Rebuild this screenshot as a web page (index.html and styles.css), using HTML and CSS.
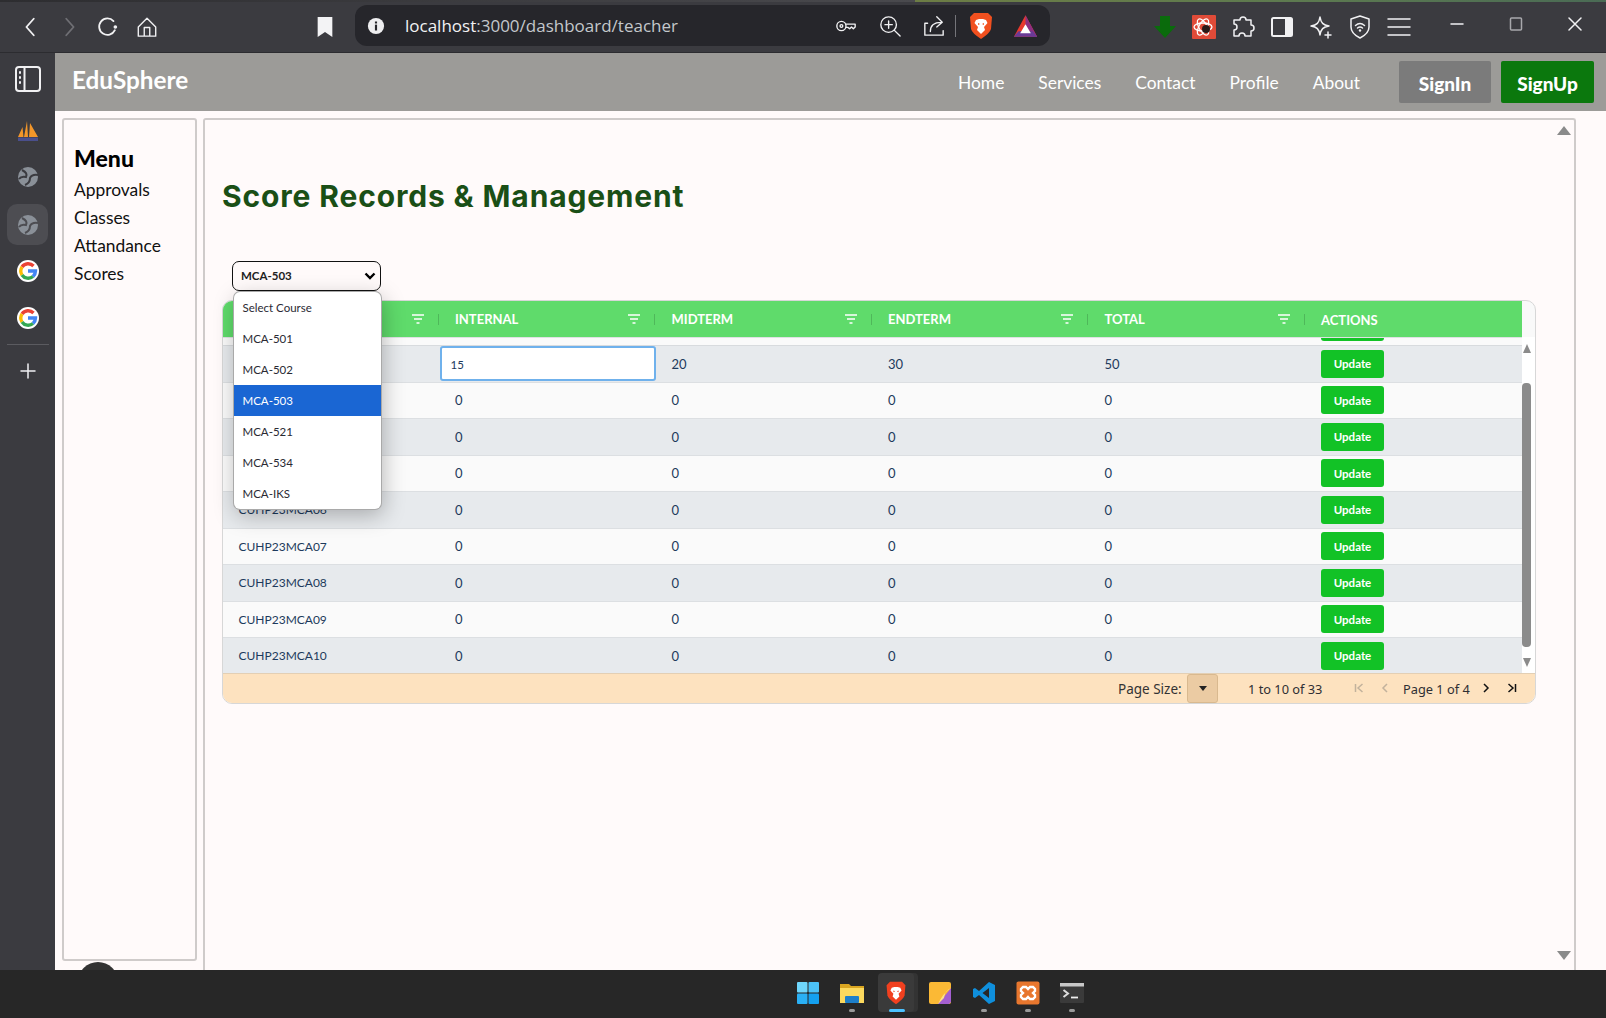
FILE: index.html
```html
<!DOCTYPE html>
<html lang="en">
<head>
<meta charset="utf-8">
<title>EduSphere</title>
<link rel="stylesheet" href="styles.css">
</head>
<body>
<div class="wallstrip"></div>
<div class="toolbar">
  <svg class="ti back" viewBox="0 0 24 24"><path d="M15 3 L7 12 L15 21" class="st"/></svg>
  <svg class="ti fwd" viewBox="0 0 24 24"><path d="M9 3 L17 12 L9 21" class="st dim"/></svg>
  <svg class="ti reload" viewBox="0 0 24 24"><path d="M19.500 15.500 A9 9 0 1 1 18 5.500" class="st"/><circle cx="20" cy="12" r="2" fill="#f1f1f3"/></svg>
  <svg class="ti home" viewBox="0 0 24 24"><path d="M2.500 12 L12 2.500 L21.500 12 V22 H2.500 Z M9 22 V12.500 H15 V22" class="st thin"/></svg>
  <svg class="ti bookmark" viewBox="0 0 24 24"><path d="M4 1 H20 V23 L12 17.500 L4 23 Z" fill="#f3f3f5"/></svg>
  <div class="urlbar">
    <svg class="info" viewBox="0 0 20 20"><circle cx="10" cy="10" r="9" fill="#eeeef0"/><rect x="8.800" y="8.500" width="2.400" height="6.500" fill="#26262b"/><rect x="8.800" y="5" width="2.400" height="2.200" fill="#26262b"/></svg>
    <span class="url">localhost<span class="urlrest">:3000/dashboard/teacher</span></span>
    <svg class="ti key" viewBox="0 0 24 24"><circle cx="7" cy="12" r="5" class="st thin"/><circle cx="7" cy="12" r="1.500" class="st thin"/><path d="M12 10 H22 V13 L20 15 L18 13 L16 15 L14 13.500 H12" class="st thin"/></svg>
    <svg class="ti zoomi" viewBox="0 0 24 24"><circle cx="10.500" cy="10.500" r="8.500" class="st thin"/><path d="M10.500 6.500 V14.500 M6.500 10.500 H14.500 M16.500 16.500 L23 23" class="st thin"/></svg>
    <svg class="ti share" viewBox="0 0 24 24"><path d="M5 9 H2 V22 H22 V17 M8 18 C8 11 12 8 20 8 M15 2 L21 8 L15 13" class="st thin"/></svg>
    <span class="urlsep"></span>
    <svg class="brave" viewBox="0 0 24 28"><path d="M5 1 H19 L23 5 L22 17 Q21 21 12 27 Q3 21 2 17 L1 5 Z" fill="#f1501f"/><path d="M7 8 L10 7 H14 L17 8 L18.500 11 L15 15 L16 18 L12 22 L8 18 L9 15 L5.500 11 Z" fill="#fff"/><path d="M9 11 L11 12 L9 13 Z M15 11 L13 12 L15 13 Z" fill="#f1501f"/></svg>
    <svg class="bat" viewBox="0 0 28 26"><path d="M14 1 L27 25 H1 Z" fill="#e8382d"/><path d="M14 1 L27 25 H20 L14 12 Z" fill="#8e2f82"/><path d="M1 25 L6 19 H22 L27 25 Z" fill="#6a3a96"/><path d="M14 11 L20 21 H8 Z" fill="#fff"/></svg>
  </div>
  <svg class="ext arrow" viewBox="0 0 24 24"><path d="M7 1 H17 V11 H23 L12 23 L1 11 H7 Z" fill="#0a6b0c"/></svg>
  <svg class="ext react" viewBox="0 0 24 24"><rect width="24" height="24" rx="1" fill="#e04b38"/><g fill="none" stroke="#fff" stroke-width="1.300"><ellipse cx="11" cy="12" rx="9" ry="4"/><ellipse cx="11" cy="12" rx="9" ry="4" transform="rotate(60 11 12)"/><ellipse cx="11" cy="12" rx="9" ry="4" transform="rotate(120 11 12)"/></g><circle cx="14" cy="14" r="4" fill="#2a1a18"/></svg>
  <svg class="ext" viewBox="0 0 24 24"><path d="M9 5 A3 3 0 1 1 15 5 H20 V10 A3 3 0 1 1 20 16 V21 H14 A3 3 0 1 0 8 21 H3 V15 A3 3 0 1 0 3 9 V5 Z" class="st thin"/></svg>
  <svg class="ext" viewBox="0 0 24 24"><rect x="2" y="3" width="20" height="18" rx="1.500" class="st"/><rect x="15" y="3" width="7" height="18" fill="#f1f1f3"/></svg>
  <svg class="ext" viewBox="0 0 24 24"><path d="M11 2 C12 8 14 10 20 11 C14 12 12 14 11 20 C10 14 8 12 2 11 C8 10 10 8 11 2 Z" class="st thin"/><path d="M19 17 V23 M16 20 H22" class="st thin"/></svg>
  <svg class="ext" viewBox="0 0 24 24"><path d="M12 1 L21 4 V12 C21 18 16 21 12 23 C8 21 3 18 3 12 V4 Z" class="st thin"/><path d="M7.500 10.500 Q12 6.500 16.500 10.500 M9.500 13 Q12 11 14.500 13" class="st thin"/><circle cx="12" cy="15.500" r="1.200" fill="#f1f1f3"/></svg>
  <svg class="ext" viewBox="0 0 24 24"><path d="M1 4 H23 M1 12 H23 M1 20 H23" class="st thin"/></svg>
  <div class="winctl">
    <svg viewBox="0 0 14 14"><path d="M1 7 H13" class="st thin"/></svg>
    <svg viewBox="0 0 14 14"><rect x="1.500" y="1" width="11" height="12" rx="1" class="st thin gray"/></svg>
    <svg viewBox="0 0 14 14"><path d="M1 1 L13 13 M13 1 L1 13" class="st thin"/></svg>
  </div>
</div>

<div class="middle">
  <aside class="rail">
    <svg class="r-ico r-panel" viewBox="0 0 26 26"><rect x="1" y="1" width="24" height="24" rx="3" class="st"/><path d="M9.500 1 V25" class="st"/><path d="M5 6 V7 M5 11 V12 M5 16 V17" class="st"/></svg>
    <svg class="r-ico fav" viewBox="0 0 24 24"><path d="M2 18 L6.500 8 L7.500 18 Z M8 18 L11 2 L12 18 Z M13 18 L14 4 L22 18 Z" fill="#f2962a"/><rect x="2" y="18.500" width="20" height="3.500" fill="#4a4f8c"/></svg>
    <svg class="r-ico globe" viewBox="0 0 24 24"><circle cx="12" cy="12" r="10" fill="#8a9098"/><path d="M6 5 Q12 8 10 12 Q5 11 3 14 M22 10 Q16 9 14 13 Q14 18 9 20" fill="none" stroke="#3b3b40" stroke-width="2"/></svg>
    <div class="r-tile"><svg class="r-ico flush" viewBox="0 0 24 24"><circle cx="12" cy="12" r="10" fill="#8a9098"/><path d="M6 5 Q12 8 10 12 Q5 11 3 14 M22 10 Q16 9 14 13 Q14 18 9 20" fill="none" stroke="#4d4d52" stroke-width="2"/></svg></div>
    <svg class="r-ico goog" viewBox="0 0 24 24"><circle cx="12" cy="12" r="11" fill="#fff"/><path d="M17.500 7 A7.500 7.500 0 0 0 6 8" fill="none" stroke="#ea4335" stroke-width="3.400"/><path d="M6 8 A7.500 7.500 0 0 0 6 16" fill="none" stroke="#fbbc05" stroke-width="3.400"/><path d="M6 16 A7.500 7.500 0 0 0 17 17.500" fill="none" stroke="#34a853" stroke-width="3.400"/><path d="M17 17.500 A7.500 7.500 0 0 0 19.500 12 H12" fill="none" stroke="#4285f4" stroke-width="3.400"/></svg>
    <svg class="r-ico goog" viewBox="0 0 24 24"><circle cx="12" cy="12" r="11" fill="#fff"/><path d="M17.500 7 A7.500 7.500 0 0 0 6 8" fill="none" stroke="#ea4335" stroke-width="3.400"/><path d="M6 8 A7.500 7.500 0 0 0 6 16" fill="none" stroke="#fbbc05" stroke-width="3.400"/><path d="M6 16 A7.500 7.500 0 0 0 17 17.500" fill="none" stroke="#34a853" stroke-width="3.400"/><path d="M17 17.500 A7.500 7.500 0 0 0 19.500 12 H12" fill="none" stroke="#4285f4" stroke-width="3.400"/></svg>
    <div class="r-div"></div>
    <svg class="r-ico plus" viewBox="0 0 16 16"><path d="M8 1 V15 M1 8 H15" class="st thin"/></svg>
  </aside>

  <div class="page">
    <header class="appbar">
      <div class="logo">EduSphere</div>
      <nav class="nav">
        <a>Home</a><a>Services</a><a>Contact</a><a>Profile</a><a>About</a>
      </nav>
      <button class="btn signin">SignIn</button>
      <button class="btn signup">SignUp</button>
    </header>
    <div class="content">
      <aside class="menu">
        <h2>Menu</h2>
        <a>Approvals</a><a>Classes</a><a>Attandance</a><a>Scores</a>
      </aside>
      <span class="avatar"></span>
      <main class="panel">
        <div class="panel-body">
          <h1>Score Records &amp; Management</h1>
          <div class="select-wrap">
            <div class="select">MCA-503
              <svg viewBox="0 0 12 8"><path d="M1.500 1.500 L6 6 L10.500 1.500" fill="none" stroke="#000" stroke-width="2.400"/></svg>
            </div>
            <ul class="dropdown">
              <li>Select Course</li><li>MCA-501</li><li>MCA-502</li><li class="sel">MCA-503</li><li>MCA-521</li><li>MCA-534</li><li>MCA-IKS</li>
            </ul>
          </div>
          <div class="grid">
            <div class="g-head">
              <div class="hc"><span></span><svg class="flt" viewBox="0 0 12 10"><path d="M0 1 H12 M2 5 H10 M4.500 9 H7.500" /></svg></div>
              <div class="hc"><span>INTERNAL</span><svg class="flt" viewBox="0 0 12 10"><path d="M0 1 H12 M2 5 H10 M4.500 9 H7.500" /></svg></div>
              <div class="hc"><span>MIDTERM</span><svg class="flt" viewBox="0 0 12 10"><path d="M0 1 H12 M2 5 H10 M4.500 9 H7.500" /></svg></div>
              <div class="hc"><span>ENDTERM</span><svg class="flt" viewBox="0 0 12 10"><path d="M0 1 H12 M2 5 H10 M4.500 9 H7.500" /></svg></div>
              <div class="hc"><span>TOTAL</span><svg class="flt" viewBox="0 0 12 10"><path d="M0 1 H12 M2 5 H10 M4.500 9 H7.500" /></svg></div>
              <div class="hc end"><span>ACTIONS</span></div>
            </div>
            <div class="g-mid">
              <div class="g-rows">
                <div class="stub"><i></i></div>
                <div class="r odd"><div></div><div class="edit"><input class="inp" value="15"></div><div>20</div><div>30</div><div>50</div><div><button class="upd">Update</button></div></div>
                <div class="r"><div></div><div>0</div><div>0</div><div>0</div><div>0</div><div><button class="upd">Update</button></div></div>
                <div class="r odd"><div></div><div>0</div><div>0</div><div>0</div><div>0</div><div><button class="upd">Update</button></div></div>
                <div class="r"><div></div><div>0</div><div>0</div><div>0</div><div>0</div><div><button class="upd">Update</button></div></div>
                <div class="r odd"><div>CUHP23MCA06</div><div>0</div><div>0</div><div>0</div><div>0</div><div><button class="upd">Update</button></div></div>
                <div class="r"><div>CUHP23MCA07</div><div>0</div><div>0</div><div>0</div><div>0</div><div><button class="upd">Update</button></div></div>
                <div class="r odd"><div>CUHP23MCA08</div><div>0</div><div>0</div><div>0</div><div>0</div><div><button class="upd">Update</button></div></div>
                <div class="r"><div>CUHP23MCA09</div><div>0</div><div>0</div><div>0</div><div>0</div><div><button class="upd">Update</button></div></div>
                <div class="r odd"><div>CUHP23MCA10</div><div>0</div><div>0</div><div>0</div><div>0</div><div><button class="upd">Update</button></div></div>
              </div>
              <div class="g-scroll">
                <span class="tri up"></span>
                <span class="thumb"></span>
                <span class="tri down"></span>
              </div>
            </div>
            <div class="g-foot">
              <span class="lbl">Page Size:</span>
              <span class="psize"><i></i></span>
              <span class="count">1 to 10 of 33</span>
              <svg class="pg" viewBox="0 0 12 12"><path d="M2.500 2 V10 M9.500 2 L5 6 L9.500 10" /></svg>
              <svg class="pg pprev" viewBox="0 0 12 12"><path d="M8 2 L4 6 L8 10" /></svg>
              <span class="pageof">Page <b>1</b> of <b>4</b></span>
              <svg class="pg on" viewBox="0 0 12 12"><path d="M4 2 L8 6 L4 10" /></svg>
              <svg class="pg on plast" viewBox="0 0 12 12"><path d="M9.500 2 V10 M2.500 2 L7 6 L2.500 10" /></svg>
            </div>
          </div>
        </div>
        <div class="page-scroll"><span class="ptri up"></span><span class="ptri down"></span></div>
      </main>
    </div>
  </div>
</div>

<footer class="taskbar">
  <div class="tk"><svg viewBox="0 0 24 24"><rect x="1" y="1" width="10.500" height="10.500" rx="1" fill="#6fd6fb"/><rect x="12.500" y="1" width="10.500" height="10.500" rx="1" fill="#4cc2f7"/><rect x="1" y="12.500" width="10.500" height="10.500" rx="1" fill="#2ab0f5"/><rect x="12.500" y="12.500" width="10.500" height="10.500" rx="1" fill="#14a0f0"/></svg></div>
  <div class="tk dot"><svg viewBox="0 0 24 24"><path d="M0 3 H9 L11 5 H24 V22 H0 Z" fill="#d9a520"/><rect y="7" width="24" height="15" fill="#fbd95e"/><rect x="5" y="15" width="14" height="7" rx="1" fill="#1d7fc9"/></svg></div>
  <div class="tk active"><svg viewBox="0 0 24 28"><path d="M5 1 H19 L23 5 L22 17 Q21 21 12 27 Q3 21 2 17 L1 5 Z" fill="#f1401f"/><path d="M7 8 L10 7 H14 L17 8 L18.500 11 L15 15 L16 18 L12 22 L8 18 L9 15 L5.500 11 Z" fill="#fff"/><path d="M9 11 L11 12 L9 13 Z M15 11 L13 12 L15 13 Z" fill="#f1401f"/></svg></div>
  <div class="tk"><svg viewBox="0 0 24 24"><rect x="1" y="1" width="22" height="22" rx="2" fill="#fbb935"/><path d="M23 7 L10 23 H21 L23 21 Z" fill="#a45fd0"/><path d="M23 7 Q17 9 16 17 L10 23 Q15 12 23 7 Z" fill="#fde08a"/></svg></div>
  <div class="tk dot"><svg viewBox="0 0 24 24"><path d="M17 1 L23 4 V20 L17 23 L7 14 L3 17 L1 16 V8 L3 7 L7 10 Z M17 7 L10.500 12 L17 17 Z" fill="#0f8fdc"/></svg></div>
  <div class="tk dot"><svg viewBox="0 0 24 24"><rect x="0.500" y="0.500" width="23" height="23" rx="2" fill="#e8772e"/><path d="M7 6 H10 L12 8 L14 6 H17 L19 8 V10 L17 12 L19 14 V16 L17 18 H14 L12 16 L10 18 H7 L5 16 V14 L7 12 L5 10 V8 Z" fill="none" stroke="#fff" stroke-width="2.400"/></svg></div>
  <div class="tk dot"><svg viewBox="0 0 24 24"><rect y="2" width="24" height="20" rx="1" fill="#3a3a3a"/><rect y="2" width="24" height="3.500" fill="#c8c8c8"/><path d="M3.500 9 L8 12.500 L3.500 16" fill="none" stroke="#ddd" stroke-width="2"/><path d="M11 16.500 H18" stroke="#eee" stroke-width="1.800"/></svg></div>
</footer>
</body>
</html>
```
FILE: styles.css
```css
* { box-sizing: border-box; }
html, body { margin: 0; padding: 0; }
body {
  width: 1606px;
  height: 1018px;
  overflow: hidden;
  display: flex;
  flex-direction: column;
  font-family: "Lato", "Liberation Sans", sans-serif;
  background: #3b3b40;
}
.st { fill: none; stroke: #f1f1f3; stroke-width: 2; stroke-linecap: round; stroke-linejoin: round; }
.st.thin { stroke-width: 1.500; }
.st.dim { stroke: #6f6f74; }
.st.gray { stroke: #a8a8ac; }

.wallstrip {
  height: 2px;
  flex: none;
  background: linear-gradient(90deg, #2d2d30 0, #4a4a4e 915px, #6d7d45 915px, #5d7a50 1300px, #4a6b55 1606px);
}
.toolbar {
  height: 51px;
  flex: none;
  display: flex;
  align-items: center;
  background: #3b3b40;
  border-bottom: 1px solid #2c2c30;
  padding-left: 20px;
}
.ti { width: 22px; height: 22px; flex: none; }
.fwd { margin-left: 16px; }
.reload { margin-left: 17px; }
.home { margin-left: 17px; }
.bookmark { margin-left: 156px; }
.urlbar {
  width: 695px;
  height: 41px;
  margin: -3px 0 0 19px;
  border-radius: 12px;
  background: #26262b;
  display: flex;
  align-items: center;
  padding-left: 12px;
  flex: none;
}
.info { width: 18px; height: 18px; flex: none; }
.url {
  margin-left: 20px;
  width: 428px;
  font-family: "Open Sans", sans-serif;
  font-size: 17px;
  font-weight: 400;
  color: #f2f2f4;
  white-space: nowrap;
}
.urlrest { color: #c4c8cc; }
.key { margin-left: 2px; }
.zoomi { margin-left: 22px; }
.share { margin-left: 22px; }
.urlsep { width: 1px; height: 22px; background: #75757a; margin-left: 10px; flex: none; }
.brave { width: 24px; height: 28px; margin-left: 13px; flex: none; }
.bat { width: 25px; height: 24px; margin-left: 20px; flex: none; }
.ext { width: 24px; height: 24px; margin-left: 15px; flex: none; }
.ext.arrow { margin-left: 103px; }
.winctl { display: flex; gap: 45px; margin-left: 39px; align-items: center; }
.winctl svg { width: 14px; height: 14px; flex: none; margin-top: -6px; }

.middle { flex: 1; display: flex; min-height: 0; overflow: hidden; }
.rail {
  width: 55px;
  flex: none;
  background: #3b3b40;
  display: flex;
  flex-direction: column;
  align-items: center;
  padding-top: 13px;
}
.r-ico { width: 24px; height: 24px; flex: none; margin-top: 23px; }
.r-ico.r-panel { width: 26px; height: 26px; margin-top: 0; }
.r-ico.fav { margin-top: 27px; }
.r-ico.globe { margin-top: 22px; }
.r-ico.flush { margin-top: 0; }
.r-tile {
  width: 41px; height: 41px;
  border-radius: 10px;
  background: #4d4d52;
  margin-top: 15px;
  display: flex; align-items: center; justify-content: center;
  flex: none;
}
.r-tile + .goog { margin-top: 14px; }
.r-div { width: 42px; height: 1px; background: #5b5b60; margin-top: 14px; flex: none; }
.r-ico.plus { width: 16px; height: 16px; margin-top: 18px; }

.page { flex: 1; display: flex; flex-direction: column; min-width: 0; }
.appbar {
  height: 58px;
  flex: none;
  background: #9c9b98;
  display: flex;
  align-items: center;
  padding-left: 17px;
}
.logo { font-size: 24.300px; font-weight: 700; color: #fff; margin-top: -6px; }
.nav { display: flex; margin-left: auto; gap: 34px; font-size: 17.400px; color: #fff; margin-top: 1px; }
.btn {
  height: 42px;
  border: 0;
  border-radius: 2px;
  font-family: inherit;
  font-weight: 900;
  font-size: 19px;
  color: #fff;
  width: 92px;
  padding: 2px 0 0;
}
.signin { background: #7b7b7b; margin-left: 39px; }
.signup { background: #0b780d; margin-left: 10px; width: 93px; margin-right: 12px; }

.content {
  flex: 1;
  display: flex;
  gap: 6px;
  background: #fffafa;
  padding: 7px 30px 0 6.500px;
  position: relative;
  min-height: 0;
}
.menu {
  width: 135.500px;
  height: 843px;
  flex: none;
  border: 2px solid #cfcbca;
  border-radius: 3px;
  padding: 24px 0 0 10.500px;
  display: flex;
  flex-direction: column;
  color: #111;
  font-size: 17.400px;
}
.menu h2 { margin: 0 0 4px 0; font-size: 23px; line-height: 28px; font-weight: 900; color: #000; }
.menu a { height: 28px; line-height: 28px; }
.avatar {
  position: absolute;
  left: 23px;
  top: 851px;
  width: 40px;
  height: 40px;
  border-radius: 50%;
  background: #333;
}
.panel {
  flex: 1;
  display: flex;
  border: 2px solid #cfcbca;
  border-bottom: 0;
  border-radius: 3px 3px 0 0;
  min-width: 0;
}
.panel-body { flex: 1; padding: 58px 20px 0 17px; min-width: 0; }
.panel h1 {
  margin: 0;
  font-family: "Inter", sans-serif;
  font-size: 30px;
  line-height: 36px;
  font-weight: 700;
  letter-spacing: .85px;
  color: #1a4f16;
}
.select-wrap { position: relative; width: 149px; margin: 47px 0 9px 10px; z-index: 2; }
.select {
  height: 30px;
  border: 1.500px solid #111;
  border-radius: 7px;
  display: flex;
  align-items: center;
  justify-content: space-between;
  padding: 0 4px 2px 8px;
  font-size: 11.500px;
  font-weight: 700;
  color: #222;
  background: #fffafa;
}
.select svg { width: 12px; height: 8px; flex: none; margin-top: 2px; }
.dropdown {
  position: absolute;
  left: 1.500px;
  top: 31px;
  width: 147px;
  margin: 0;
  padding: 0;
  list-style: none;
  background: #fff;
  border-radius: 6px;
  overflow: hidden;
  box-shadow: 0 0 0 1px #a9a9a9, 2px 6px 22px rgba(0, 0, 0, .28);
  font-size: 11.500px;
  color: #2a2a33;
}
.dropdown li { height: 31px; line-height: 31px; padding-left: 9px; }
.dropdown li.sel { background: #1a66d3; color: #fff; }

.grid {
  width: 1314px;
  height: 404px;
  border: 1px solid #d7d7d7;
  border-radius: 10px;
  overflow: hidden;
  background: #f9f9f9;
  display: flex;
  flex-direction: column;
  font-family: "Lato", sans-serif;
  font-size: 13px;
  color: #1d3a5c;
}
.g-head {
  height: 36px;
  flex: none;
  width: 1299px;
  background: #5fdb6b;
  display: grid;
  grid-template-columns: repeat(6, 216.500px);
  color: #fff;
  font-weight: 700;
  font-size: 13px;
}
.hc {
  display: flex;
  align-items: center;
  justify-content: space-between;
  padding: 0 16px 0 15.500px;
  position: relative;
}
.hc::after {
  content: "";
  position: absolute;
  right: 1px;
  top: 13px;
  width: 1px;
  height: 11px;
  background: #4fb85a;
}
.hc.end::after { display: none; }
.hc.end span { margin-top: 2px; }
.flt { width: 12px; height: 10px; fill: none; stroke: #fff; stroke-width: 1.300; flex: none; }
.g-mid { flex: 1; display: flex; min-height: 0; background: #fff; }
.g-rows { width: 1299px; flex: none; overflow: hidden; background: #fafafa; }
.stub {
  height: 9px;
  border-top: 1px solid #dfe1e3;
  border-bottom: 1px solid #d8dbde;
  padding-left: 1098px;
}
.stub i { display: block; width: 63px; height: 3px; background: #12c226; border-radius: 0 0 3px 3px; }
.r {
  height: 36.500px;
  display: grid;
  grid-template-columns: repeat(6, 216.500px);
  align-items: center;
  border-bottom: 1px solid #dcdfe2;
  background: #fafafa;
}
.r.odd { background: #e7eaed; }
.r > div { padding-left: 15.500px; }
.r > div:first-child { font-size: 12px; }
.r > div.edit { padding-left: 0; }
.inp {
  width: 216px;
  height: 35px;
  padding: 2px 0 0 9px;
  border: 2px solid #6fb1ec;
  border-radius: 3px;
  background: #fff;
  font: inherit;
  font-size: 11.500px;
  color: #1d3a5c;
  outline: 0;
  display: block;
}
.upd {
  width: 63px;
  height: 28px;
  display: block;
  border: 0;
  padding: 0;
  border-radius: 3px;
  background: #12c226;
  color: #fff;
  font-family: inherit;
  font-weight: 700;
  font-size: 11.500px;
}
.g-scroll {
  width: 9px;
  flex: none;
  background: #fff;
  display: flex;
  flex-direction: column;
  align-items: center;
  padding-top: 7px;
}
.tri { width: 0; height: 0; border-left: 4.500px solid transparent; border-right: 4.500px solid transparent; flex: none; }
.tri.up { border-bottom: 9px solid #8b8b8b; }
.tri.down { border-top: 9px solid #8b8b8b; margin-top: 11px; }
.thumb { width: 9px; height: 264px; background: #8b8b8b; border-radius: 4px; margin-top: 30px; flex: none; }
.g-foot {
  height: 30px;
  flex: none;
  background: #fde2bf;
  border-top: 1px solid #e3cfb4;
  display: flex;
  align-items: center;
  padding-left: 895px;
  font-family: "Noto Sans", sans-serif;
  font-size: 12.800px;
  color: #2f2f33;
}
.lbl { color: #333; font-size: 13.500px; width: 69px; flex: none; white-space: nowrap; }
.psize {
  width: 31px;
  height: 29px;
  flex: none;
  background: #ebcba3;
  border: 1px solid #d9b98f;
  border-radius: 3px;
  display: flex;
  align-items: center;
  justify-content: center;
}
.psize i { width: 0; height: 0; border-left: 4px solid transparent; border-right: 4px solid transparent; border-top: 5px solid #222; }
.count { margin-left: 30px; width: 105px; flex: none; white-space: nowrap; }
.pg { width: 12px; height: 12px; flex: none; fill: none; stroke: #c2b29c; stroke-width: 1.500; margin-top: -2px; }
.pg.on { stroke: #111; }
.pprev { margin-left: 14px; }
.pageof { margin-left: 12px; width: 77px; flex: none; white-space: nowrap; }
.pageof b { font-weight: 400; }
.plast { margin-left: 14px; }
.page-scroll {
  width: 18px;
  flex: none;
  display: flex;
  flex-direction: column;
  justify-content: space-between;
  align-items: center;
  padding: 6px 2px 10px 0;
}
.ptri { width: 0; height: 0; border-left: 7px solid transparent; border-right: 7px solid transparent; }
.ptri.up { border-bottom: 9px solid #8a8a8a; }
.ptri.down { border-top: 9px solid #8a8a8a; }

.taskbar {
  height: 48px;
  flex: none;
  background: #272727;
  display: flex;
  align-items: center;
  padding-left: 786px;
  position: relative;
}
.tk {
  width: 44px;
  height: 39px;
  flex: none;
  display: flex;
  align-items: center;
  justify-content: center;
  position: relative;
  margin-top: -3px;
}
.tk svg { width: 24px; height: 24px; }
.tk.dot::after {
  content: "";
  position: absolute;
  bottom: 0;
  left: 19px;
  width: 6px;
  height: 3px;
  border-radius: 2px;
  background: #9a9a9a;
}
.tk.active { background: #3a3a3a; border-radius: 4px; width: 36px; margin: -3px 4px 0; box-shadow: 4px 0 0 #333; }
.tk.active::after {
  content: "";
  position: absolute;
  bottom: 0;
  left: 11px;
  width: 16px;
  height: 3px;
  border-radius: 2px;
  background: #4cc2ff;
}
```
